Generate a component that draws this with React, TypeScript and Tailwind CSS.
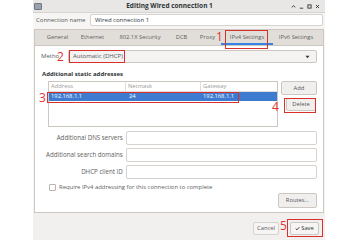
import React from 'react';

const tabs = [
  { label: 'General', w: 'w-[33px]' },
  { label: 'Ethernet', w: 'w-[37px]' },
  { label: '802.1X Security', w: 'w-[58px]' },
  { label: 'DCB', w: 'w-[25px]' },
  { label: 'Proxy', w: 'w-[27px]' },
  { label: 'IPv4 Settings', w: 'w-[52px]', active: true },
  { label: 'IPv6 Settings', w: 'w-[46px]' },
];

const Field: React.FC<{ label: string }> = ({ label }) => (
  <div className="flex items-center h-[14px] mb-[3px]">
    <div className="w-[86px] text-right pr-[3px] text-[6.2px] text-[#5e5e5e] whitespace-nowrap">{label}</div>
    <div className="w-[194px] h-[14px] bg-white border border-[#d6d2ce] rounded-[2px]" />
  </div>
);

const Mark: React.FC<{ n: string; className: string }> = ({ n, className }) => (
  <div className={`absolute text-[12px] leading-none text-[#e0342f] ${className}`}>{n}</div>
);

const Box: React.FC<{ className: string }> = ({ className }) => (
  <div className={`absolute border-[1.5px] border-[#d8312c] ${className}`} />
);

export default function App() {
  return (
    <div className="w-[360px] h-[240px] bg-white flex font-['Open_Sans',sans-serif] overflow-hidden">
      <div className="relative ml-[33px] w-[292px] h-[240px] bg-[#f6f5f4] flex flex-col">
        {/* title bar */}
        <div className="h-[13px] bg-[#e8e7e6] border-b border-[#d6d3d0] flex items-center">
          <div className="ml-[1px] w-[8px] h-[7px] bg-[#9aa3ad] rounded-[1px] border border-[#6f7882]" />
          <div className="flex-1 text-center text-[6.5px] font-bold text-[#2e3436] pl-[6px]">Editing Wired connection 1</div>
          <div className="flex items-center gap-[3px] mr-[5px] text-[#2e3436]">
            <svg width="5" height="5" viewBox="0 0 5 5"><path d="M0.8 3.4 L2.5 1.6 L4.2 3.4" fill="none" stroke="currentColor" strokeWidth="0.9" /></svg>
            <svg width="5" height="5" viewBox="0 0 5 5"><path d="M0.8 4.2 H4.2" stroke="currentColor" strokeWidth="0.9" /></svg>
            <svg width="5" height="5" viewBox="0 0 5 5"><rect x="0.9" y="0.9" width="3.2" height="3.2" fill="none" stroke="currentColor" strokeWidth="0.9" /></svg>
            <svg width="5" height="5" viewBox="0 0 5 5"><path d="M1 1 L4 4 M4 1 L1 4" stroke="currentColor" strokeWidth="0.9" /></svg>
          </div>
        </div>

        {/* connection name */}
        <div className="flex items-center h-[12px] mt-[1px]">
          <div className="w-[57px] pl-[3px] text-[6px] text-[#555]">Connection name</div>
          <div className="w-[233px] h-[12px] bg-white border border-[#d6d2ce] rounded-[2px] flex items-center pl-[4px] text-[6px] text-[#2e3436]">
            Wired connection 1
          </div>
        </div>

        {/* notebook */}
        <div className="mt-[3px] mx-[1px] flex flex-col h-[184px]">
          <div className="h-[16px] bg-[#e1deda] border border-[#cdc7c2] border-b-0 flex pl-[6px]">
            {tabs.map((t) => (
              <div
                key={t.label}
                className={`${t.w} flex items-center justify-center text-[5.8px] text-[#5e5e5e] whitespace-nowrap ${t.active ? 'border-b-2 border-[#3584e4] pt-[2px]' : ''}`}
              >
                {t.label}
              </div>
            ))}
          </div>
          <div className="flex-1 bg-white border border-[#cdc7c2] flex flex-col pl-[6px] pr-[6px] pt-[4px]">
            {/* method */}
            <div className="flex items-center h-[13px]">
              <div className="w-[27px] text-[6px] text-[#5e5e5e]">Metho</div>
              <div className="w-[249px] h-[13px] bg-[#f4f3f2] border border-[#cdc7c2] rounded-[2px] flex items-center justify-between pl-[4px] pr-[6px] text-[6px] text-[#555]">
                <span>Automatic (DHCP)</span>
                <svg width="5" height="4" viewBox="0 0 5 4"><path d="M0.5 0.8 H4.5 L2.5 3.3 Z" fill="#333" /></svg>
              </div>
            </div>

            <div className="mt-[7px] ml-[1px] text-[6px] font-bold text-[#2e3436] leading-[9px]">Additional static addresses</div>

            {/* table + buttons */}
            <div className="flex mt-[2px] h-[46px]">
              <div className="ml-[7px] w-[230px] h-[46px] bg-white border border-[#cdc7c2] flex flex-col">
                <div className="h-[10px] flex text-[5.8px] text-[#9a9a9a] border-b border-[#e0ddda]">
                  <div className="w-[77px] pl-[2px] border-r border-[#e0ddda] flex items-center">Address</div>
                  <div className="w-[75px] pl-[2px] border-r border-[#e0ddda] flex items-center">Netmask</div>
                  <div className="flex-1 pl-[2px] flex items-center">Gateway</div>
                </div>
                <div className="h-[9px] bg-[#3d7bd0] flex text-[5.8px] text-white">
                  <div className="w-[77px] pl-[2px] flex items-center">192.168.1.1</div>
                  <div className="w-[75px] pl-[3px] flex items-center">24</div>
                  <div className="flex-1 pl-[2px] flex items-center">192.168.1.1</div>
                </div>
              </div>
              <div className="ml-[3px] flex flex-col items-end w-[36px]">
                <div className="w-[36px] h-[14px] bg-[#f0efee] border border-[#cdc7c2] rounded-[2px] flex items-center justify-center text-[5.8px] text-[#555]">Add</div>
                <div className="mt-[3px] mr-[1px] w-[30px] h-[13px] bg-[#f0efee] border border-[#cdc7c2] rounded-[2px] flex items-center justify-center text-[5.8px] text-[#555]">Delete</div>
              </div>
            </div>

            {/* fields */}
            <div className="mt-[4px]">
              <Field label="Additional DNS servers" />
              <Field label="Additional search domains" />
              <Field label="DHCP client ID" />
            </div>

            {/* checkbox */}
            <div className="flex items-center mt-[1px] ml-[8px] h-[8px]">
              <div className="w-[7px] h-[7px] bg-white border border-[#b9b4ae] rounded-[1px]" />
              <div className="ml-[3px] text-[5.9px] text-[#5e5e5e] whitespace-nowrap">Require IPv4 addressing for this connection to complete</div>
            </div>

            <div className="flex justify-end mt-[2px]">
              <div className="w-[39px] h-[15px] bg-[#f0efee] border border-[#cdc7c2] rounded-[2px] flex items-center justify-center text-[5.8px] text-[#555]">Routes...</div>
            </div>
          </div>
        </div>

        {/* footer */}
        <div className="flex-1 flex justify-end items-start pt-[9px] pr-[6px] bg-[#f1f0ef]">
          <div className="w-[26px] h-[13px] bg-[#f6f5f4] border border-[#d6d2ce] rounded-[2px] flex items-center justify-center text-[5.8px] text-[#555]">Cancel</div>
          <div className="ml-[11px] w-[29px] h-[13px] bg-[#f6f5f4] border border-[#cdc7c2] rounded-[2px] flex items-center justify-center gap-[1px] text-[5.8px] text-[#333]">
            <svg width="5" height="5" viewBox="0 0 5 5"><path d="M0.7 2.6 L2 3.8 L4.3 1.2" fill="none" stroke="#333" strokeWidth="0.9" /></svg>
            <span>Save</span>
          </div>
        </div>

        {/* annotations */}
        <Box className="left-[192px] top-[30px] w-[43px] h-[19px]" />
        <Box className="left-[36px] top-[50px] w-[56px] h-[13px]" />
        <Box className="left-[14px] top-[92px] w-[192px] h-[11px]" />
        <Box className="left-[251px] top-[98px] w-[32px] h-[15px]" />
        <Box className="left-[254px] top-[219px] w-[36px] h-[18px]" />
        <Mark n="1" className="left-[183px] top-[31px]" />
        <Mark n="2" className="left-[24px] top-[51px]" />
        <Mark n="3" className="left-[6px] top-[92px]" />
        <Mark n="4" className="left-[239px] top-[101px]" />
        <Mark n="5" className="left-[247px] top-[220px]" />
      </div>
    </div>
  );
}
